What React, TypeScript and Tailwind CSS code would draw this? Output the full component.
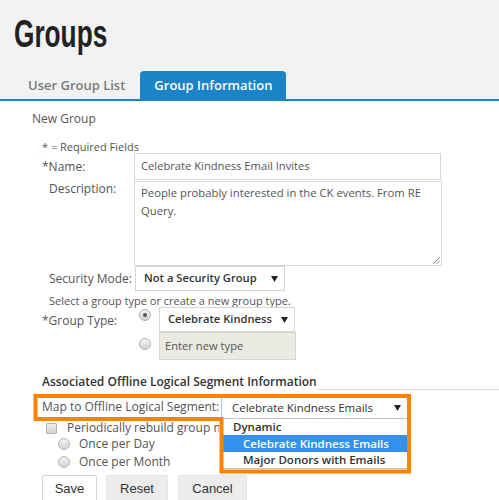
import React from "react";

const Arrow = () => (
  <svg width="7" height="7" viewBox="0 0 7 7" className="shrink-0">
    <polygon points="0,1 7,1 3.5,7" fill="#222" />
  </svg>
);

const Radio = ({ checked = false }: { checked?: boolean }) => (
  <div className="w-[12px] h-[12px] rounded-full border border-[#b3b3b3] bg-gradient-to-b from-[#f4f4f4] to-[#d2d2d2] flex items-center justify-center shrink-0">
    {checked && <div className="w-[4px] h-[4px] rounded-full bg-[#555]" />}
  </div>
);

export default function App() {
  return (
    <div className="relative w-[499px] h-[500px] overflow-hidden bg-white font-['Open_Sans',sans-serif]">
      {/* Header */}
      <div className="bg-[#f2f2f2] border-b-2 border-[#1b83c6]">
        <div className="pl-[14px] pt-[12px] h-[56px]">
          <div className="origin-left scale-x-[0.69] text-[38px] leading-[44px] font-bold text-[#222] font-['Liberation_Sans',sans-serif] whitespace-nowrap">
            Groups
          </div>
        </div>
        <div className="flex pl-[14px] mt-[15px] h-[28px]">
          <div className="px-[14px] text-[13px] leading-[28px] font-semibold text-[#7a7a7a]">User Group List</div>
          <div className="ml-[1px] px-[14px] text-[13px] leading-[28px] font-semibold text-white bg-[#1b83c6] rounded-t-[4px]">
            Group Information
          </div>
        </div>
      </div>

      {/* Content */}
      <div className="pl-[32px] text-[12px] text-[#555]">
        <div className="mt-[10px] leading-[16px]">New Group</div>
        <div className="pl-[10px]">
          <div className="mt-[13px] leading-[13px] text-[11px]">* = Required Fields</div>

          {/* Name */}
          <div className="flex h-[27px]">
            <div className="w-[92px] pt-[6px] leading-[16px]">*Name:</div>
            <div className="w-[307px] h-[27px] border border-[#d6d6d6] pl-[6px] flex items-center whitespace-nowrap text-[11.2px]">
              Celebrate Kindness Email Invites
            </div>
          </div>

          {/* Description */}
          <div className="flex mt-[1px]">
            <div className="w-[92px] pl-[7px] leading-[16px]">Description:</div>
            <div className="relative w-[308px] h-[85px] border border-[#d6d6d6] pl-[6px] pt-[2px] leading-[18px] whitespace-nowrap text-[11.3px]">
              <div>People probably interested in the CK events. From RE</div>
              <div>Query.</div>
              <svg width="8" height="8" viewBox="0 0 8 8" className="absolute right-[1px] bottom-[1px]">
                <line x1="1" y1="8" x2="8" y2="1" stroke="#999" strokeWidth="1" />
                <line x1="4.5" y1="8" x2="8" y2="4.5" stroke="#999" strokeWidth="1" />
              </svg>
            </div>
          </div>

          {/* Security Mode */}
          <div className="flex h-[25px]">
            <div className="w-[92px] pl-[7px] pt-[5px] leading-[16px] whitespace-nowrap">Security Mode:</div>
            <div className="ml-[1px] w-[150px] h-[25px] border border-[#d6d6d6] pl-[8px] pr-[6px] flex items-center justify-between font-semibold text-[#333] text-[11.2px]">
              <span className="whitespace-nowrap">Not a Security Group</span>
              <Arrow />
            </div>
          </div>

          <div className="mt-[3px] leading-[14px] pl-[7px] whitespace-nowrap text-[11px]">
            Select a group type or create a new group type.
          </div>

          {/* Group Type */}
          <div className="flex mt-[-1px]">
            <div className="w-[92px] pt-[6px] leading-[16px] whitespace-nowrap">*Group Type:</div>
            <div className="flex flex-col">
              <div className="flex h-[25px]">
                <div className="w-[25px] pl-[5px] pt-[2px]">
                  <Radio checked />
                </div>
                <div className="w-[136px] h-[25px] border border-[#d6d6d6] pl-[8px] pr-[6px] flex items-center justify-between font-semibold text-[#333] text-[11.2px]">
                  <span className="whitespace-nowrap">Celebrate Kindness</span>
                  <Arrow />
                </div>
              </div>
              <div className="flex h-[28px]">
                <div className="w-[25px] pl-[5px] pt-[6px]">
                  <Radio />
                </div>
                <div className="w-[137px] h-[28px] border border-[#d6d6d6] bg-[#ebebe4] pl-[5px] flex items-center whitespace-nowrap text-[11.2px]">
                  Enter new type
                </div>
              </div>
            </div>
          </div>

          {/* Heading */}
          <div className="flex items-end mt-[14px]">
            <div className="leading-[16px] font-semibold text-[#333] whitespace-nowrap">
              Associated Offline Logical Segment Information
            </div>
            <div className="flex-1 h-[16px] border-b border-[#dcdcdc]" />
          </div>

          {/* Map row */}
          <div className="flex mt-[6px] h-[23px]">
            <div className="w-[179px] pt-[3px] leading-[16px] whitespace-nowrap">Map to Offline Logical Segment:</div>
            <div className="relative z-10 w-[189px] h-[23px] border border-[#a9c7e6] bg-white pl-[10px] pr-[8px] flex items-center justify-between text-[#333] text-[11.5px]">
              <span className="whitespace-nowrap">Celebrate Kindness Emails</span>
              <Arrow />
              <div className="absolute left-[-1px] top-full w-[189px] border border-[#b9c6d6] bg-white font-semibold text-[#333] text-[11.5px]">
                <div className="h-[16px] leading-[16px] pl-[11px]">Dynamic</div>
                <div className="h-[17px] leading-[17px] pl-[21px] bg-[#3391f2] text-white whitespace-nowrap">
                  Celebrate Kindness Emails
                </div>
                <div className="h-[16px] leading-[16px] pl-[21px] whitespace-nowrap">Major Donors with Emails</div>
              </div>
            </div>
          </div>

          {/* Checkbox */}
          <div className="flex items-center mt-[1px] h-[16px] whitespace-nowrap">
            <div className="ml-[4px] w-[11px] h-[11px] border border-[#b3b3b3] rounded-[1px] bg-gradient-to-b from-[#eeeeee] to-[#d4d4d4] shrink-0" />
            <div className="ml-[10px] leading-[16px] w-[152px] overflow-hidden">Periodically rebuild group membership</div>
          </div>

          <div className="flex items-center h-[16px] whitespace-nowrap">
            <div className="ml-[16px]">
              <Radio />
            </div>
            <div className="ml-[9px] leading-[16px]">Once per Day</div>
          </div>
          <div className="flex items-center mt-[2px] h-[16px] whitespace-nowrap">
            <div className="ml-[16px]">
              <Radio />
            </div>
            <div className="ml-[9px] leading-[16px]">Once per Month</div>
          </div>

          {/* Buttons */}
          <div className="flex mt-[5px] font-['Liberation_Sans',sans-serif] text-[13px] text-[#333]">
            <div className="w-[55px] h-[28px] bg-white border border-[#d4d4d4] rounded-[2px] flex items-center justify-center">Save</div>
            <div className="ml-[9px] w-[62px] h-[28px] bg-[#ececec] border border-[#e4e4e4] rounded-[2px] flex items-center justify-center">Reset</div>
            <div className="ml-[10px] w-[69px] h-[28px] bg-[#ececec] border border-[#e4e4e4] rounded-[2px] flex items-center justify-center">Cancel</div>
          </div>
        </div>
      </div>

      {/* Orange annotation outline */}
      <svg className="absolute left-0 top-0 pointer-events-none z-20" width="499" height="500" viewBox="0 0 499 500">
        <path d="M35.5 396 H409 V471.5 H221.5 V419 H35.5 Z" fill="none" stroke="#ff8200" strokeWidth="4" strokeLinejoin="miter" />
      </svg>
    </div>
  );
}
